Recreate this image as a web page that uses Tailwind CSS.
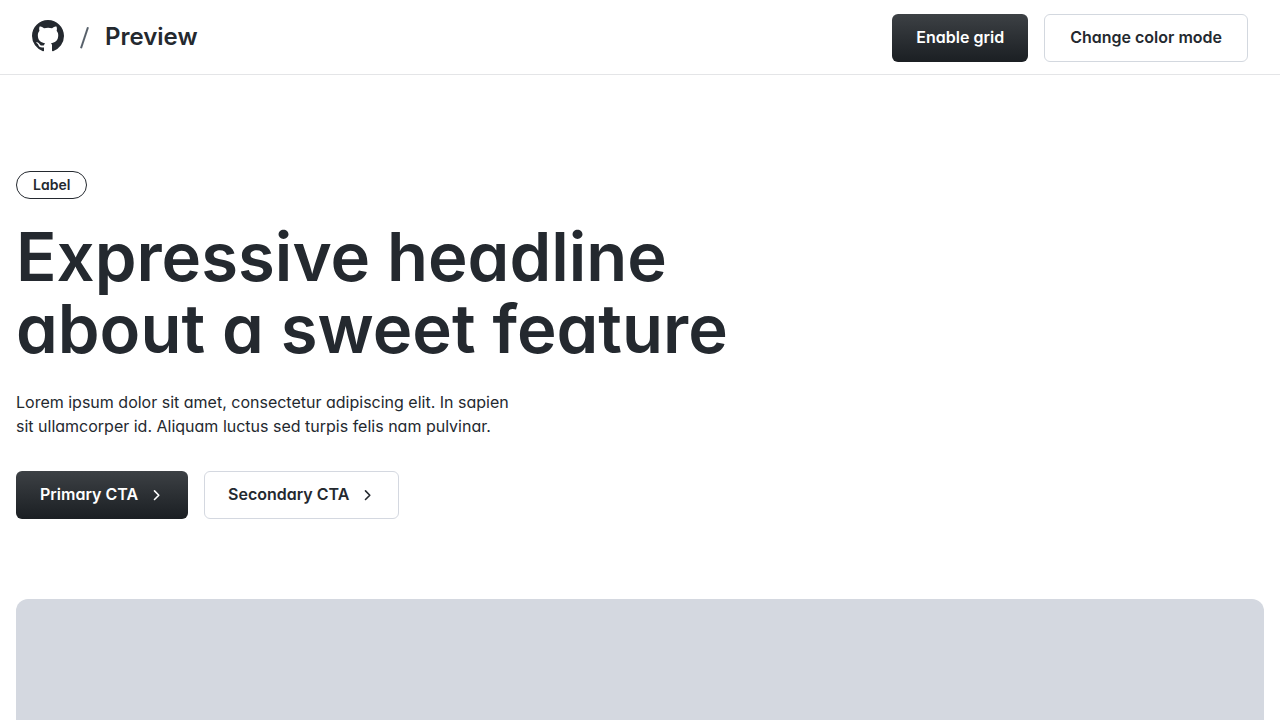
<!DOCTYPE html>
<html lang="en">
<head>
<meta charset="utf-8">
<meta name="viewport" content="width=device-width, initial-scale=1">
<title>Preview</title>
<script src="https://cdn.jsdelivr.net/npm/@tailwindcss/browser@4"></script>
</head>
<body class="flex min-h-screen flex-col bg-white font-['Inter',sans-serif] text-[#24292f] [font-feature-settings:'cv11']">
<header class="flex items-center justify-between border-b border-[#e4e5e7] px-8 pt-3.5 pb-3">
  <div class="flex items-center gap-4 pb-1">
    <a href="#" aria-label="GitHub home">
      <svg class="size-8" viewBox="0 0 16 16" fill="currentColor" aria-hidden="true"><path d="M8 0c4.42 0 8 3.58 8 8a8.013 8.013 0 0 1-5.45 7.59c-.4.08-.55-.17-.55-.38 0-.27.01-1.13.01-2.2 0-.75-.25-1.23-.54-1.48 1.78-.2 3.65-.88 3.65-3.95 0-.88-.31-1.59-.82-2.15.08-.2.36-1.02-.08-2.12 0 0-.67-.22-2.2.82-.64-.18-1.32-.27-2-.27-.68 0-1.36.09-2 .27-1.53-1.03-2.2-.82-2.2-.82-.44 1.1-.16 1.92-.08 2.12-.51.56-.82 1.28-.82 2.15 0 3.06 1.86 3.75 3.64 3.95-.23.2-.44.55-.51 1.07-.46.21-1.61.55-2.33-.66-.15-.24-.6-.83-1.23-.82-.67.01-.27.38.01.53.34.19.73.9.82 1.13.16.45.68 1.31 2.69.94 0 .67.01 1.3.01 1.49 0 .21-.15.45-.55.38A7.995 7.995 0 0 1 0 8c0-4.42 3.58-8 8-8Z"/></svg>
    </a>
    <svg class="mt-1 h-6 w-[9px] text-[#57606a]" viewBox="0 0 9 24" fill="none" stroke="currentColor" stroke-width="2" aria-hidden="true"><path d="M8 1.2 1 22.2"/></svg>
    <span class="pt-0.5 text-2xl font-semibold">Preview</span>
  </div>
  <div class="flex gap-4">
    <button type="button" class="flex h-12 items-center rounded-md bg-linear-to-b from-[#3d4145] to-[#1b1f23] px-6 pb-0.5 font-semibold text-white">Enable grid</button>
    <button type="button" class="flex h-12 items-center rounded-md border border-[#d3d8df] px-[25px] pb-0.5 font-semibold">Change color mode</button>
  </div>
</header>
<main class="flex flex-1 flex-col px-4 pt-24">
  <section class="flex flex-col items-start">
    <span class="flex h-7 items-center rounded-full border border-[#24292f] px-4 text-sm font-semibold">Label</span>
    <h1 class="mt-[22px] text-[67px] leading-[72px] font-semibold">Expressive headline<br>about a sweet feature</h1>
    <p class="mt-[25px] leading-6">Lorem ipsum dolor sit amet, consectetur adipiscing elit. In sapien<br>sit ullamcorper id. Aliquam luctus sed turpis felis nam pulvinar.</p>
    <div class="mt-[33px] flex gap-4">
      <a href="#" class="flex h-12 items-center gap-2.5 rounded-md bg-linear-to-b from-[#3d4145] to-[#1b1f23] px-6 font-semibold text-white"><span class="pb-0.5">Primary CTA</span>
        <svg class="size-4" viewBox="0 0 16 16" fill="none" stroke="currentColor" stroke-width="1.6" stroke-linecap="round" stroke-linejoin="round" aria-hidden="true"><path d="m6.5 3.9 4.3 4.3-4.3 4.3"/></svg></a>
      <a href="#" class="flex h-12 items-center gap-2.5 rounded-md border border-[#d4d8e0] px-[23px] font-semibold"><span class="pb-0.5">Secondary CTA</span>
        <svg class="size-4" viewBox="0 0 16 16" fill="none" stroke="currentColor" stroke-width="1.6" stroke-linecap="round" stroke-linejoin="round" aria-hidden="true"><path d="m6.5 3.9 4.3 4.3-4.3 4.3"/></svg></a>
    </div>
  </section>
  <div class="mt-20 min-h-30 flex-1 rounded-t-xl bg-[#d4d8e0]"></div>
</main>
</body>
</html>
